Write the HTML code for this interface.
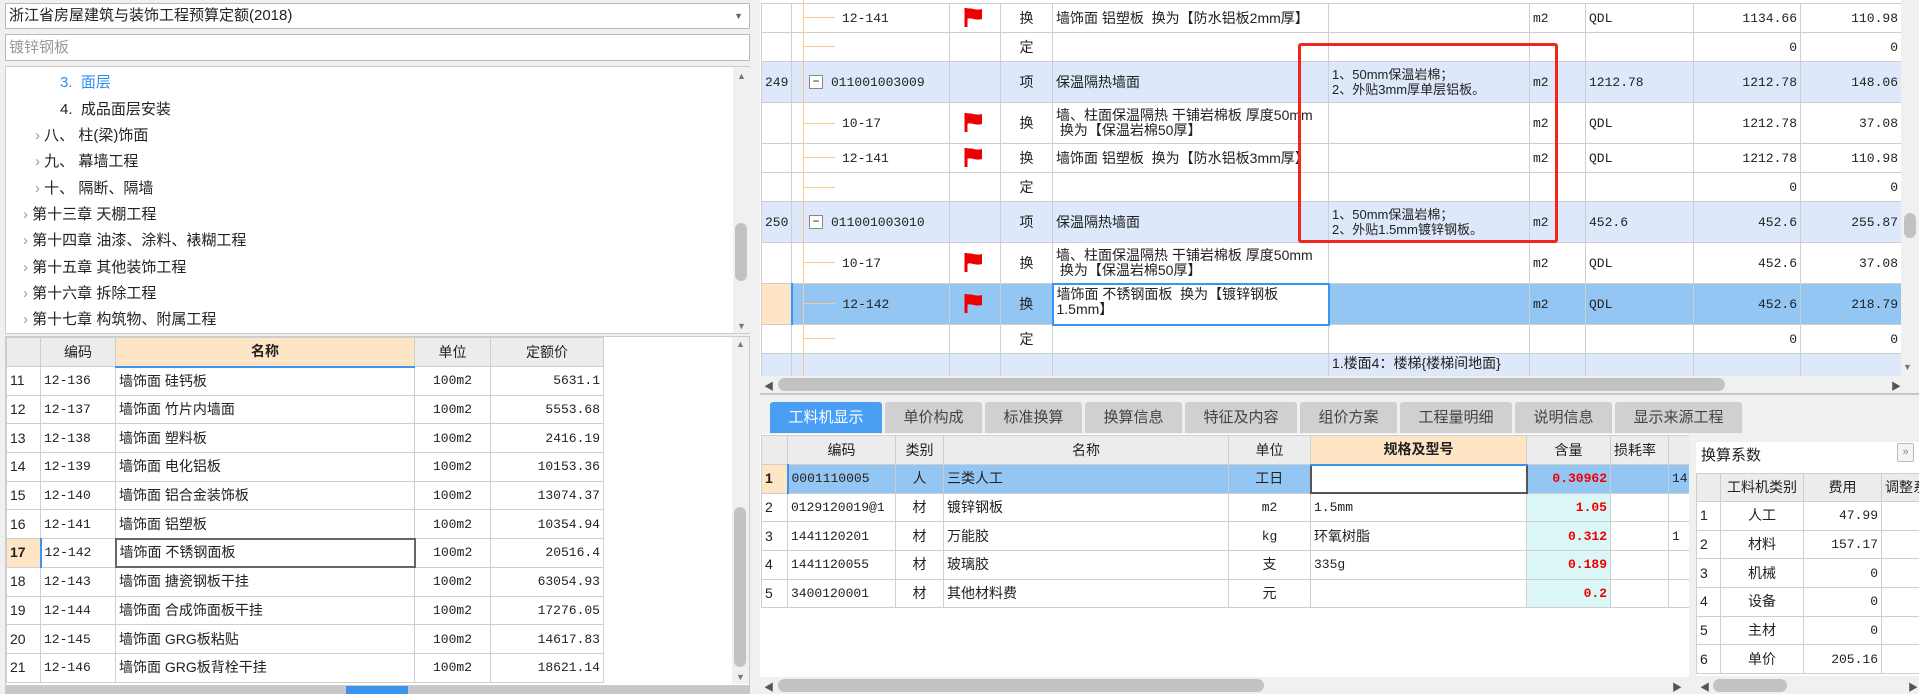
<!DOCTYPE html>
<html><head><meta charset="utf-8">
<style>
*{margin:0;padding:0;box-sizing:border-box}
body{width:1919px;height:694px;position:relative;overflow:hidden;background:#f0f0f0;font-family:"Liberation Sans","Noto Sans CJK SC",sans-serif;font-size:13px;color:#222}
.a{position:absolute}
table{border-collapse:collapse;table-layout:fixed;position:absolute}
td,th{border:1px solid #cfcfcf;padding:0 3px;white-space:nowrap;overflow:hidden;font-weight:normal;line-height:15px}
.r{text-align:right}.c{text-align:center}
.blue td{background:#dde9fa}
.sel td{background:#94c6f4}
.num{font-family:"Liberation Mono","Noto Sans CJK SC",monospace;font-size:13px}
.vs{position:absolute;background:#f0f0f0}
.thumb{position:absolute;background:#c2c2c2;border-radius:8px}
.tab{position:absolute;top:402px;height:31px;background:#d0d0d0;border-radius:3px 3px 0 0;font-size:15px;color:#444;text-align:center;line-height:31px}
</style></head><body>
<div class="a" style="left:0;top:0;width:755px;height:694px;background:#f0f0f0"></div>
<div class="a" style="left:5px;top:3px;width:745px;height:26px;background:#fff;border:1px solid #bbb;font-size:15px;line-height:24px;padding-left:3px">浙江省房屋建筑与装饰工程预算定额(2018)<span style="position:absolute;right:6px;top:0;font-size:9px;color:#666">▼</span></div>
<div class="a" style="left:5px;top:34px;width:745px;height:27px;background:#fff;border:1px solid #bbb;font-size:15px;line-height:25px;padding-left:3px;color:#999">镀锌钢板</div>
<div class="a" style="left:5px;top:66px;width:745px;height:268px;background:#fff;border:1px solid #ccc;font-size:15px">
 <div class="a" style="left:54px;top:4px;color:#2f8ff0">3. &nbsp;面层</div>
 <div class="a" style="left:54px;top:31px">4. &nbsp;成品面层安装</div>
 <div class="a" style="left:29px;top:57px"><span style="color:#999">›</span> 八、 柱(梁)饰面</div>
 <div class="a" style="left:29px;top:83px"><span style="color:#999">›</span> 九、 幕墙工程</div>
 <div class="a" style="left:29px;top:110px"><span style="color:#999">›</span> 十、 隔断、隔墙</div>
 <div class="a" style="left:17px;top:136px"><span style="color:#999">›</span> 第十三章 天棚工程</div>
 <div class="a" style="left:17px;top:162px"><span style="color:#999">›</span> 第十四章 油漆、涂料、裱糊工程</div>
 <div class="a" style="left:17px;top:189px"><span style="color:#999">›</span> 第十五章 其他装饰工程</div>
 <div class="a" style="left:17px;top:215px"><span style="color:#999">›</span> 第十六章 拆除工程</div>
 <div class="a" style="left:17px;top:241px"><span style="color:#999">›</span> 第十七章 构筑物、附属工程</div>
 <div class="vs" style="left:727px;top:0;width:17px;height:266px"></div>
 <div class="a" style="left:731px;top:4px;font-size:9px;color:#777">▲</div>
 <div class="a" style="left:731px;top:254px;font-size:9px;color:#777">▼</div>
 <div class="thumb" style="left:729px;top:156px;width:12px;height:58px"></div>
</div>
<div class="a" style="left:5px;top:336px;width:745px;height:350px;background:#fff;border:1px solid #ccc"></div>
<table style="left:6px;top:337px;width:597px;font-size:14px">
<colgroup><col style="width:34px"><col style="width:75px"><col style="width:299px"><col style="width:76px"><col style="width:113px"></colgroup>
<tr style="height:29px;background:#ececec"><td></td><td class="c">编码</td><td class="c" style="background:#fde5c6;font-weight:bold;border-bottom:2px solid #3d93f0">名称</td><td class="c">单位</td><td class="c">定额价</td></tr>
<tr style="height:28.7px"><td>11</td><td class="num">12-136</td><td>墙饰面 硅钙板</td><td class="c num">100m2</td><td class="r num">5631.1</td></tr>
<tr style="height:28.7px"><td>12</td><td class="num">12-137</td><td>墙饰面 竹片内墙面</td><td class="c num">100m2</td><td class="r num">5553.68</td></tr>
<tr style="height:28.7px"><td>13</td><td class="num">12-138</td><td>墙饰面 塑料板</td><td class="c num">100m2</td><td class="r num">2416.19</td></tr>
<tr style="height:28.7px"><td>14</td><td class="num">12-139</td><td>墙饰面 电化铝板</td><td class="c num">100m2</td><td class="r num">10153.36</td></tr>
<tr style="height:28.7px"><td>15</td><td class="num">12-140</td><td>墙饰面 铝合金装饰板</td><td class="c num">100m2</td><td class="r num">13074.37</td></tr>
<tr style="height:28.7px"><td>16</td><td class="num">12-141</td><td>墙饰面 铝塑板</td><td class="c num">100m2</td><td class="r num">10354.94</td></tr>
<tr style="height:28.7px"><td style="background:#fde5c6;font-weight:bold;border-right:2px solid #3d93f0">17</td><td class="num">12-142</td><td style="border:2px solid #666">墙饰面 不锈钢面板</td><td class="c num">100m2</td><td class="r num">20516.4</td></tr>
<tr style="height:28.7px"><td>18</td><td class="num">12-143</td><td>墙饰面 搪瓷钢板干挂</td><td class="c num">100m2</td><td class="r num">63054.93</td></tr>
<tr style="height:28.7px"><td>19</td><td class="num">12-144</td><td>墙饰面 合成饰面板干挂</td><td class="c num">100m2</td><td class="r num">17276.05</td></tr>
<tr style="height:28.7px"><td>20</td><td class="num">12-145</td><td>墙饰面 GRG板粘贴</td><td class="c num">100m2</td><td class="r num">14617.83</td></tr>
<tr style="height:28.7px"><td>21</td><td class="num">12-146</td><td>墙饰面 GRG板背栓干挂</td><td class="c num">100m2</td><td class="r num">18621.14</td></tr>
</table>
<div class="vs" style="left:732px;top:337px;width:17px;height:347px"></div>
<div class="a" style="left:736px;top:339px;font-size:9px;color:#777">▲</div>
<div class="a" style="left:736px;top:672px;font-size:9px;color:#777">▼</div>
<div class="thumb" style="left:734px;top:507px;width:12px;height:160px"></div>
<div class="a" style="left:5px;top:686px;width:745px;height:8px;background:#c8c8c8"></div>
<div class="a" style="left:346px;top:686px;width:62px;height:8px;background:#3d93f0"></div>

<div class="a" style="left:760px;top:0;width:1159px;height:376px;background:#fff;overflow:hidden">
<table style="left:1px;top:3px;width:1140px;font-size:14px">
<colgroup><col style="width:30px"><col style="width:158px"><col style="width:51px"><col style="width:52px"><col style="width:276px"><col style="width:201px"><col style="width:56px"><col style="width:108px"><col style="width:107px"><col style="width:101px"></colgroup>
<tr style="height:29px"><td></td><td style="padding-left:50px" class="num">12-141</td><td></td><td class="c">换</td><td>墙饰面 铝塑板 &nbsp;换为【防水铝板2mm厚】</td><td></td><td class="num">m2</td><td class="num">QDL</td><td class="r num">1134.66</td><td class="r num">110.98</td></tr>
<tr style="height:29px"><td></td><td></td><td></td><td class="c">定</td><td></td><td></td><td></td><td></td><td class="r num">0</td><td class="r num">0</td></tr>
<tr class="blue" style="height:41px"><td class="num">249</td><td style="padding-left:39px" class="num">011001003009</td><td></td><td class="c">项</td><td>保温隔热墙面</td><td style="font-size:13px">1、50mm保温岩棉；<br>2、外贴3mm厚单层铝板。</td><td class="num">m2</td><td class="num">1212.78</td><td class="r num">1212.78</td><td class="r num">148.06</td></tr>
<tr style="height:41px"><td></td><td style="padding-left:50px" class="num">10-17</td><td></td><td class="c">换</td><td>墙、柱面保温隔热 干铺岩棉板 厚度50mm<br>&nbsp;换为【保温岩棉50厚】</td><td></td><td class="num">m2</td><td class="num">QDL</td><td class="r num">1212.78</td><td class="r num">37.08</td></tr>
<tr style="height:29px"><td></td><td style="padding-left:50px" class="num">12-141</td><td></td><td class="c">换</td><td>墙饰面 铝塑板 &nbsp;换为【防水铝板3mm厚】</td><td></td><td class="num">m2</td><td class="num">QDL</td><td class="r num">1212.78</td><td class="r num">110.98</td></tr>
<tr style="height:29px"><td></td><td></td><td></td><td class="c">定</td><td></td><td></td><td></td><td></td><td class="r num">0</td><td class="r num">0</td></tr>
<tr class="blue" style="height:41px"><td class="num">250</td><td style="padding-left:39px" class="num">011001003010</td><td></td><td class="c">项</td><td>保温隔热墙面</td><td style="font-size:13px">1、50mm保温岩棉；<br>2、外贴1.5mm镀锌钢板。</td><td class="num">m2</td><td class="num">452.6</td><td class="r num">452.6</td><td class="r num">255.87</td></tr>
<tr style="height:41px"><td></td><td style="padding-left:50px" class="num">10-17</td><td></td><td class="c">换</td><td>墙、柱面保温隔热 干铺岩棉板 厚度50mm<br>&nbsp;换为【保温岩棉50厚】</td><td></td><td class="num">m2</td><td class="num">QDL</td><td class="r num">452.6</td><td class="r num">37.08</td></tr>
<tr class="sel" style="height:41px"><td style="background:#fde5c6;border-right:2px solid #3d93f0"></td><td style="padding-left:50px" class="num">12-142</td><td></td><td class="c">换</td><td style="background:#fff;border:2px solid #3d93f0;vertical-align:top;padding-top:2px">墙饰面 不锈钢面板 &nbsp;换为【镀锌钢板<br>1.5mm】</td><td></td><td class="num">m2</td><td class="num">QDL</td><td class="r num">452.6</td><td class="r num">218.79</td></tr>
<tr style="height:29px"><td></td><td></td><td></td><td class="c">定</td><td></td><td></td><td></td><td></td><td class="r num">0</td><td class="r num">0</td></tr>
<tr class="blue" style="height:29px"><td></td><td></td><td></td><td></td><td></td><td style="vertical-align:top;padding-top:2px">1.楼面4：楼梯{楼梯间地面}</td><td></td><td></td><td></td><td></td></tr>
</table>
<div class="a" style="left:43px;top:0;width:1px;height:376px;background:#f5c98f"></div>
<div class="a" style="left:43px;top:17px;width:32px;height:1px;background:#f5c98f"></div>
<div class="a" style="left:43px;top:46px;width:32px;height:1px;background:#f5c98f"></div>
<div class="a" style="left:43px;top:123px;width:32px;height:1px;background:#f5c98f"></div>
<div class="a" style="left:43px;top:157px;width:32px;height:1px;background:#f5c98f"></div>
<div class="a" style="left:43px;top:187px;width:32px;height:1px;background:#f5c98f"></div>
<div class="a" style="left:43px;top:262px;width:32px;height:1px;background:#f5c98f"></div>
<div class="a" style="left:43px;top:303px;width:32px;height:1px;background:#f5c98f"></div>
<div class="a" style="left:43px;top:338px;width:32px;height:1px;background:#f5c98f"></div>
<div class="a" style="left:49px;top:75px;width:14px;height:14px;border:1px solid #888;background:#fff;font-size:12px;line-height:11px;text-align:center">−</div>
<div class="a" style="left:49px;top:215px;width:14px;height:14px;border:1px solid #888;background:#fff;font-size:12px;line-height:11px;text-align:center">−</div>
<div class="a" style="left:538px;top:43px;width:260px;height:200px;border:3px solid #f0261c;border-radius:3px"></div>
<div class="vs" style="left:1141px;top:0;width:18px;height:376px"></div>
<div class="thumb" style="left:1144px;top:213px;width:12px;height:25px"></div>
<div class="a" style="left:1143px;top:362px;font-size:9px;color:#777">▼</div>
</div>
<svg class="a" style="left:963px;top:6px" width="22" height="22" viewBox="0 0 22 22"><path d="M3 2v19" stroke="#e00" stroke-width="3"/><path d="M4 3c4-2 8 2 15 0v10c-7 2-11-2-15 0z" fill="#e00"/></svg>
<svg class="a" style="left:963px;top:111px" width="22" height="22" viewBox="0 0 22 22"><path d="M3 2v19" stroke="#e00" stroke-width="3"/><path d="M4 3c4-2 8 2 15 0v10c-7 2-11-2-15 0z" fill="#e00"/></svg>
<svg class="a" style="left:963px;top:146px" width="22" height="22" viewBox="0 0 22 22"><path d="M3 2v19" stroke="#e00" stroke-width="3"/><path d="M4 3c4-2 8 2 15 0v10c-7 2-11-2-15 0z" fill="#e00"/></svg>
<svg class="a" style="left:963px;top:251px" width="22" height="22" viewBox="0 0 22 22"><path d="M3 2v19" stroke="#e00" stroke-width="3"/><path d="M4 3c4-2 8 2 15 0v10c-7 2-11-2-15 0z" fill="#e00"/></svg>
<svg class="a" style="left:963px;top:292px" width="22" height="22" viewBox="0 0 22 22"><path d="M3 2v19" stroke="#e00" stroke-width="3"/><path d="M4 3c4-2 8 2 15 0v10c-7 2-11-2-15 0z" fill="#e00"/></svg>
<div class="a" style="left:760px;top:376px;width:1159px;height:16px;background:#f0f0f0"></div>
<div class="a" style="left:764px;top:378px;font-size:10px;color:#555">◀</div>
<div class="thumb" style="left:778px;top:378px;width:947px;height:13px"></div>
<div class="a" style="left:1891px;top:378px;font-size:10px;color:#555">▶</div>
<div class="a" style="left:760px;top:393px;width:1159px;height:2px;background:#c8c8c8"></div>

<div class="tab" style="left:770px;width:112px;background:#4a9ff5;color:#fff">工料机显示</div>
<div class="tab" style="left:885px;width:97px">单价构成</div>
<div class="tab" style="left:985px;width:97px">标准换算</div>
<div class="tab" style="left:1085px;width:97px">换算信息</div>
<div class="tab" style="left:1185px;width:112px">特征及内容</div>
<div class="tab" style="left:1300px;width:97px">组价方案</div>
<div class="tab" style="left:1400px;width:112px">工程量明细</div>
<div class="tab" style="left:1515px;width:97px">说明信息</div>
<div class="tab" style="left:1615px;width:127px">显示来源工程</div>

<div class="a" style="left:760px;top:434px;width:929px;height:260px;background:#fff;overflow:hidden">
<table style="left:1px;top:1px;width:968px;font-size:14px">
<colgroup><col style="width:26px"><col style="width:108px"><col style="width:48px"><col style="width:285px"><col style="width:82px"><col style="width:216px"><col style="width:84px"><col style="width:58px"><col style="width:61px"></colgroup>
<tr style="height:29px;background:#ececec"><td></td><td class="c">编码</td><td class="c">类别</td><td class="c">名称</td><td class="c">单位</td><td class="c" style="background:#fde5c6;font-weight:bold;border-bottom:2px solid #3d93f0">规格及型号</td><td class="c">含量</td><td>损耗率</td><td></td></tr>
<tr class="sel" style="height:28.7px"><td style="background:#fde5c6;font-weight:bold;border-right:2px solid #3d93f0">1</td><td class="num">0001110005</td><td class="c">人</td><td>三类人工</td><td class="c">工日</td><td style="background:#fff;border:2px solid #555"></td><td class="r num" style="color:#e00;font-weight:bold">0.30962</td><td></td><td class="num">14</td></tr>
<tr style="height:28.7px"><td>2</td><td class="num">0129120019@1</td><td class="c">材</td><td>镀锌钢板</td><td class="c num">m2</td><td class="num">1.5mm</td><td class="r num" style="color:#e00;font-weight:bold;background:#dbf6f6">1.05</td><td></td><td></td></tr>
<tr style="height:28.7px"><td>3</td><td class="num">1441120201</td><td class="c">材</td><td>万能胶</td><td class="c num">kg</td><td>环氧树脂</td><td class="r num" style="color:#e00;font-weight:bold;background:#dbf6f6">0.312</td><td></td><td class="num">1</td></tr>
<tr style="height:28.7px"><td>4</td><td class="num">1441120055</td><td class="c">材</td><td>玻璃胶</td><td class="c">支</td><td class="num">335g</td><td class="r num" style="color:#e00;font-weight:bold;background:#dbf6f6">0.189</td><td></td><td></td></tr>
<tr style="height:28.7px"><td>5</td><td class="num">3400120001</td><td class="c">材</td><td>其他材料费</td><td class="c">元</td><td></td><td class="r num" style="color:#e00;font-weight:bold;background:#dbf6f6">0.2</td><td></td><td></td></tr>
</table>
<div class="a" style="left:0;top:243px;width:929px;height:17px;background:#f0f0f0"></div>
<div class="a" style="left:4px;top:245px;font-size:10px;color:#555">◀</div>
<div class="thumb" style="left:18px;top:245px;width:486px;height:13px"></div>
<div class="a" style="left:912px;top:245px;font-size:10px;color:#555">▶</div>
</div>

<div class="a" style="left:1689px;top:434px;width:230px;height:260px;background:#f0f0f0"></div>
<div class="a" style="left:1696px;top:442px;width:223px;height:30px;background:#fff"></div>
<div class="a" style="left:1701px;top:444px;font-size:15px">换算系数</div>
<div class="a" style="left:1897px;top:443px;width:17px;height:19px;border:1px solid #bbb;border-radius:2px;font-size:11px;color:#888;line-height:16px;text-align:center;background:#f4f4f4">»</div>
<div class="a" style="left:1696px;top:472px;width:223px;height:204px;background:#fff"></div>
<table style="left:1696px;top:473px;width:245px;font-size:14px">
<colgroup><col style="width:24px"><col style="width:83px"><col style="width:78px"><col style="width:60px"></colgroup>
<tr style="height:28px;background:#ececec"><td></td><td class="c">工料机类别</td><td class="c">费用</td><td>调整系数</td></tr>
<tr style="height:28.7px"><td>1</td><td class="c">人工</td><td class="r num">47.99</td><td></td></tr>
<tr style="height:28.7px"><td>2</td><td class="c">材料</td><td class="r num">157.17</td><td></td></tr>
<tr style="height:28.7px"><td>3</td><td class="c">机械</td><td class="r num">0</td><td></td></tr>
<tr style="height:28.7px"><td>4</td><td class="c">设备</td><td class="r num">0</td><td></td></tr>
<tr style="height:28.7px"><td>5</td><td class="c">主材</td><td class="r num">0</td><td></td></tr>
<tr style="height:28.7px"><td>6</td><td class="c">单价</td><td class="r num">205.16</td><td></td></tr>
</table>
<div class="a" style="left:1696px;top:677px;width:223px;height:17px;background:#f0f0f0"></div>
<div class="a" style="left:1700px;top:679px;font-size:10px;color:#555">◀</div>
<div class="thumb" style="left:1713px;top:679px;width:74px;height:13px"></div>
<div class="a" style="left:1908px;top:679px;font-size:10px;color:#555">▶</div>
</body></html>
